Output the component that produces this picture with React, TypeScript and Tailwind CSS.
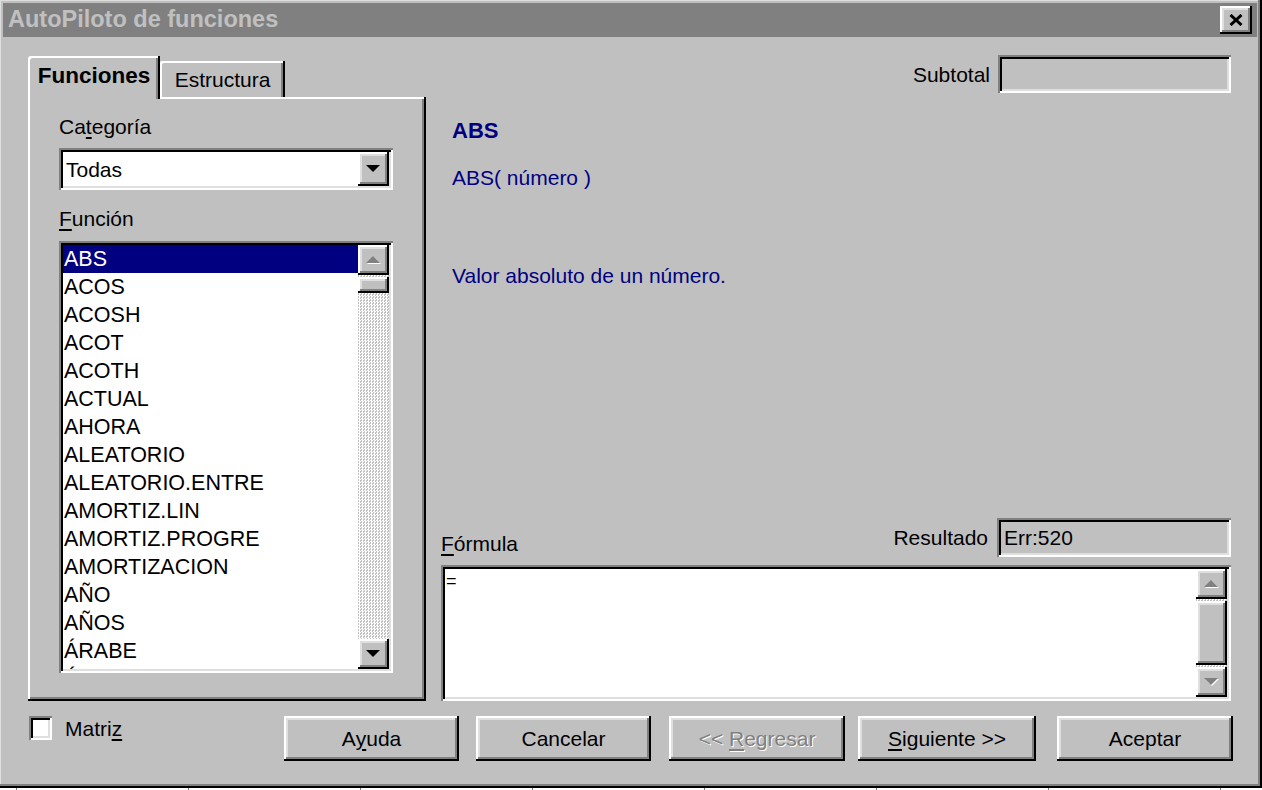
import React from 'react';

const raised =
  'shadow-[inset_-2px_-2px_0_#000,inset_2px_2px_0_#fff,inset_-4px_-4px_0_#808080,inset_4px_4px_0_#dfdfdf]';
const sunken =
  'shadow-[inset_2px_2px_0_#808080,inset_-2px_-2px_0_#fff,inset_4px_4px_0_#000,inset_-4px_-4px_0_#dfdfdf]';

const funciones = [
  'ABS',
  'ACOS',
  'ACOSH',
  'ACOT',
  'ACOTH',
  'ACTUAL',
  'AHORA',
  'ALEATORIO',
  'ALEATORIO.ENTRE',
  'AMORTIZ.LIN',
  'AMORTIZ.PROGRE',
  'AMORTIZACION',
  'AÑO',
  'AÑOS',
  'ÁRABE',
  'ÁREAS',
];

const Arrow = ({ dir, disabled }: { dir: 'up' | 'down'; disabled?: boolean }) => {
  const up = dir === 'up';
  const pts = up ? '7,0 14,7 0,7' : '0,0 14,0 7,7';
  const shadow = up ? '8,1 15,8 1,8' : '1,1 15,1 8,8';
  return (
    <svg width="16" height="9" viewBox="0 0 16 9">
      {disabled && <polygon points={shadow} fill="#fff" />}
      <polygon points={pts} fill={disabled ? '#808080' : '#000'} />
    </svg>
  );
};

const ScrollBtn = ({ dir, disabled }: { dir: 'up' | 'down'; disabled?: boolean }) => (
  <div className={`w-[31px] h-[30px] shrink-0 bg-[#c0c0c0] flex items-center justify-center ${raised}`}>
    <Arrow dir={dir} disabled={disabled} />
  </div>
);

const Button = ({
  children,
  className = '',
  disabled,
}: {
  children: React.ReactNode;
  className?: string;
  disabled?: boolean;
}) => (
  <div
    className={`h-[45px] flex items-center justify-center text-[21px] bg-[#c0c0c0] whitespace-pre ${raised} ${
      disabled ? 'text-[#808080] [text-shadow:1px_1px_0_#fff]' : 'text-black'
    } ${className}`}
  >
    {children}
  </div>
);

const U = ({ children }: { children: React.ReactNode }) => (
  <span className="underline underline-offset-[3px]">{children}</span>
);

export default function App() {
  return (
    <div className="w-[1262px] h-[790px] bg-white font-['Liberation_Sans',Arial,sans-serif] text-black overflow-hidden">
      <div className="w-[1262px] h-[788px] bg-[#c0c0c0] flex flex-col pt-[3px] pl-[3px] pr-[5px] shadow-[inset_-2px_-2px_0_#000,inset_-4px_-4px_0_#808080,inset_1px_1px_0_#dfdfdf]">
        {/* title bar */}
        <div className="h-[34px] shrink-0 bg-[#808080] flex items-center justify-between pl-[5px] pr-[5px]">
          <span className="text-[23.5px] font-bold text-[#c0c0c0] leading-none">AutoPiloto de funciones</span>
          <div className={`w-[32px] h-[28px] bg-[#c0c0c0] flex items-center justify-center ${raised}`}>
            <svg width="14" height="12" viewBox="0 0 14 12">
              <path d="M1.5 1 L12.5 11 M12.5 1 L1.5 11" stroke="#000" strokeWidth="3" />
            </svg>
          </div>
        </div>

        {/* main */}
        <div className="flex mt-[18px] pl-[25px] pr-[26px] gap-[15px]">
          {/* left: tabs */}
          <div className="w-[398px] shrink-0 pt-[1px] flex flex-col">
            <div className="relative z-10 h-[43px] -mb-[2px] flex items-end">
              <div className="w-[132px] h-[43px] bg-[#c0c0c0] rounded-tl-[3px] flex items-center justify-center pb-[2px] shadow-[inset_-2px_0_0_#000,inset_2px_2px_0_#fff,inset_-4px_0_0_#808080]">
                <span className="text-[22.5px] font-bold leading-none">Funciones</span>
              </div>
              <div className="w-[125px] h-[36px] mb-[2px] rounded-tl-[2px] flex items-center justify-center shadow-[inset_-2px_0_0_#000,inset_2px_2px_0_#fff,inset_-4px_0_0_#808080]">
                <span className="text-[21px] leading-none">Estructura</span>
              </div>
            </div>
            <div className="h-[604px] flex flex-col pl-[31px] pt-[16px] shadow-[inset_-2px_-2px_0_#000,inset_2px_2px_0_#fff,inset_-4px_-4px_0_#808080]">
              <div className="h-[28px] leading-[28px] text-[21px]">
                Ca<U>t</U>egoría
              </div>
              <div className={`mt-[7px] w-[334px] h-[42px] bg-white flex items-center p-[4px] ${sunken}`}>
                <span className="flex-1 pl-[3px] text-[21px] leading-none">Todas</span>
                <div className={`w-[31px] h-[34px] bg-[#c0c0c0] flex items-center justify-center ${raised}`}>
                  <Arrow dir="down" />
                </div>
              </div>
              <div className="mt-[15px] h-[28px] leading-[28px] text-[21px]">
                <U>F</U>unción
              </div>
              <div className={`mt-[8px] w-[334px] h-[432px] bg-white p-[4px] flex ${sunken}`}>
                <div className="flex-1 overflow-hidden">
                  {funciones.map((f, i) => (
                    <div
                      key={f}
                      className={`h-[28px] leading-[28px] pl-[1px] text-[21.5px] whitespace-nowrap ${
                        i === 0 ? 'bg-[#000080] text-white' : 'text-black'
                      }`}
                    >
                      {f}
                    </div>
                  ))}
                </div>
                <div className="w-[31px] flex flex-col bg-[repeating-conic-gradient(#fff_0_25%,#c0c0c0_0_50%)] bg-[length:3px_3px]">
                  <ScrollBtn dir="up" disabled />
                  <div className={`mt-[2px] h-[16px] bg-[#c0c0c0] ${raised}`} />
                  <div className="flex-1" />
                  <ScrollBtn dir="down" />
                </div>
              </div>
            </div>
          </div>

          {/* right */}
          <div className="flex-1 h-[646px] flex flex-col">
            <div className="h-[38px] flex items-center justify-end gap-[8px]">
              <span className="text-[21px] leading-none">Subtotal</span>
              <div className={`w-[233px] h-[38px] bg-[#c0c0c0] ${sunken}`} />
            </div>
            <div className="mt-[24px] pl-[11px] h-[28px] leading-[28px] text-[22px] font-bold text-[#000080]">ABS</div>
            <div className="mt-[19px] pl-[11px] h-[28px] leading-[28px] text-[21px] text-[#000080]">ABS( número )</div>
            <div className="mt-[70px] pl-[11px] h-[28px] leading-[28px] text-[21px] text-[#000080]">
              Valor absoluto de un número.
            </div>
            <div className="flex-1" />
            <div className="h-[39px] flex items-center">
              <div className="self-end h-[28px] leading-[28px] text-[21px] -mb-[1px]">
                <U>F</U>órmula
              </div>
              <div className="flex-1" />
              <span className="text-[21px] leading-none mr-[9px]">Resultado</span>
              <div className={`w-[234px] h-[39px] bg-[#c0c0c0] flex items-center pl-[7px] ${sunken}`}>
                <span className="text-[21px] leading-none">Err:520</span>
              </div>
            </div>
            <div className={`mt-[8px] h-[136px] bg-white p-[4px] flex ${sunken}`}>
              <div className="flex-1 pl-[1px] text-[18px] leading-[24px]">=</div>
              <div className="w-[31px] flex flex-col justify-between bg-[repeating-conic-gradient(#fff_0_25%,#c0c0c0_0_50%)] bg-[length:3px_3px]">
                <ScrollBtn dir="up" disabled />
                <div className={`h-[64px] bg-[#c0c0c0] ${raised}`} />
                <ScrollBtn dir="down" disabled />
              </div>
            </div>
          </div>
        </div>

        {/* bottom row */}
        <div className="mt-[15px] flex items-start pl-[26px] pr-[24px]">
          <div className="flex items-center gap-[13px]">
            <div className={`w-[23px] h-[24px] bg-white ${sunken}`} />
            <span className="text-[21px] leading-none">
              Matri<U>z</U>
            </span>
          </div>
          <div className="ml-auto flex">
            <Button className="w-[175px]">
              A<U>y</U>uda
            </Button>
            <Button className="w-[175px] ml-[17px]">Cancelar</Button>
            <Button className="w-[176px] ml-[18px]" disabled>
              {'<< '}
              <U>R</U>egresar
            </Button>
            <Button className="w-[178px] ml-[13px]">
              <U>S</U>iguiente {'>>'}
            </Button>
            <Button className="w-[176px] ml-[21px]">Aceptar</Button>
          </div>
        </div>
      </div>
      {/* spreadsheet grid ticks under the dialog */}
      <div className="h-[2px] flex pl-[16px] gap-[171px]">
        {Array.from({ length: 8 }).map((_, i) => (
          <div key={i} className="w-[1px] h-[2px] bg-[#808080]" />
        ))}
      </div>
    </div>
  );
}
